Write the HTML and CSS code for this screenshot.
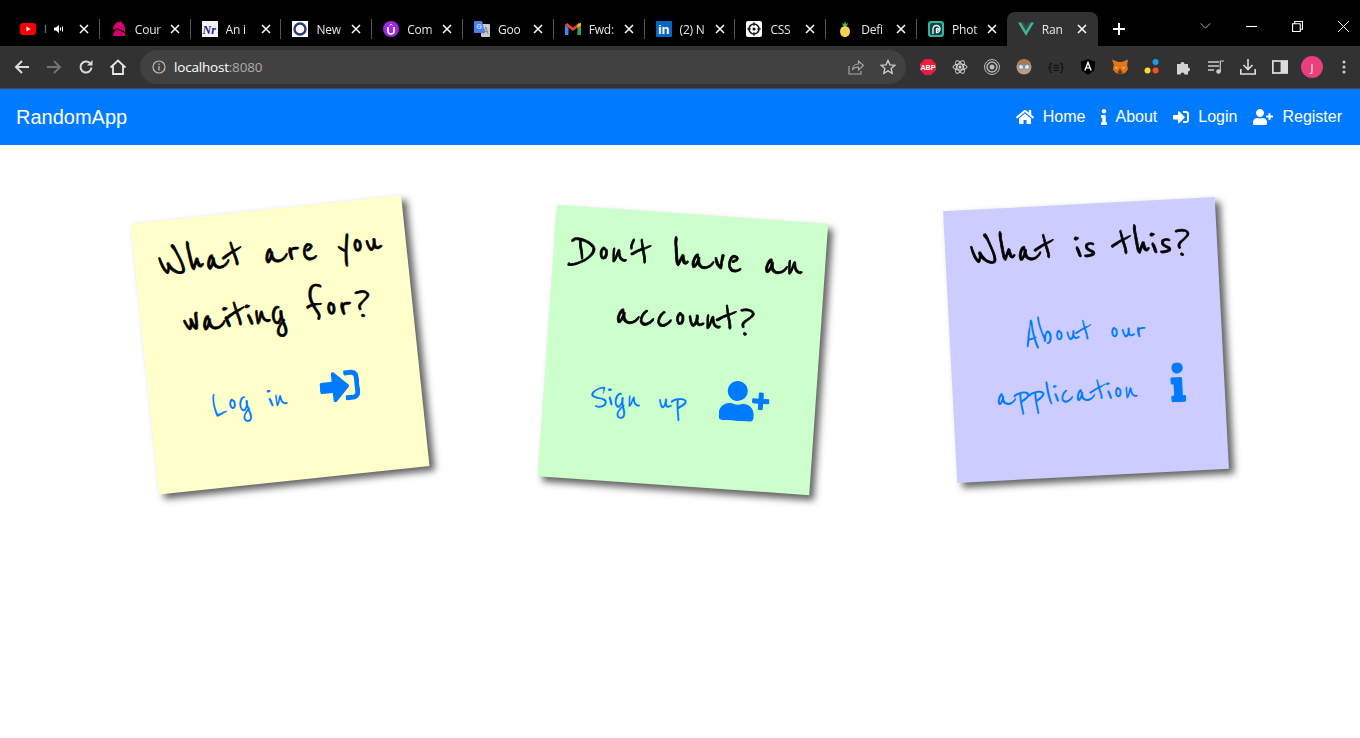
FILE: index.html
```html
<!DOCTYPE html>
<html lang="en">
<head>
    <meta charset="UTF-8">
    <meta name="viewport" content="width=device-width, initial-scale=1.0">
    <title>RandomApp</title>
    <link rel="stylesheet" href="styles.css">
</head>
<body>

<svg class="defs" width="0" height="0" aria-hidden="true">
    <symbol id="i-home" viewBox="0 0 576 512"><path d="M280.37 148.26L96 300.11V464a16 16 0 0 0 16 16l112.06-.29a16 16 0 0 0 15.92-16V368a16 16 0 0 1 16-16h64a16 16 0 0 1 16 16v95.64a16 16 0 0 0 16 16.05L464 480a16 16 0 0 0 16-16V300L295.67 148.26a12.19 12.19 0 0 0-15.3 0zM571.6 251.47L488 182.56V44.05a12 12 0 0 0-12-12h-56a12 12 0 0 0-12 12v72.61L318.47 43a48 48 0 0 0-61 0L4.34 251.47a12 12 0 0 0-1.6 16.9l25.5 31A12 12 0 0 0 45.15 301l235.22-193.74a12.19 12.19 0 0 1 15.3 0L530.9 301a12 12 0 0 0 16.9-1.6l25.5-31a12 12 0 0 0-1.7-16.93z"/></symbol>
    <symbol id="i-info" viewBox="0 0 192 512"><path d="M20 424.229h20V279.771H20c-11.046 0-20-8.954-20-20V212c0-11.046 8.954-20 20-20h112c11.046 0 20 8.954 20 20v212.229h20c11.046 0 20 8.954 20 20V492c0 11.046-8.954 20-20 20H20c-11.046 0-20-8.954-20-20v-47.771c0-11.046 8.954-20 20-20zM96 0C56.235 0 24 32.235 24 72s32.235 72 72 72 72-32.236 72-72S135.764 0 96 0z"/></symbol>
    <symbol id="i-login" viewBox="0 0 512 512"><path d="M416 448h-84c-6.6 0-12-5.4-12-12v-40c0-6.6 5.4-12 12-12h84c17.7 0 32-14.3 32-32V160c0-17.7-14.3-32-32-32h-84c-6.6 0-12-5.4-12-12V76c0-6.6 5.4-12 12-12h84c53 0 96 43 96 96v192c0 53-43 96-96 96zm-47-201L201 79c-15-15-41-4.5-41 17v96H24c-13.3 0-24 10.7-24 24v96c0 13.3 10.7 24 24 24h136v96c0 21.5 26 32 41 17l168-168c9.3-9.4 9.3-24.6 0-34z"/></symbol>
    <symbol id="i-user" viewBox="0 0 640 512"><path d="M624 208h-64v-64c0-8.8-7.2-16-16-16h-32c-8.8 0-16 7.2-16 16v64h-64c-8.8 0-16 7.2-16 16v32c0 8.8 7.2 16 16 16h64v64c0 8.8 7.2 16 16 16h32c8.8 0 16-7.2 16-16v-64h64c8.8 0 16-7.2 16-16v-32c0-8.8-7.2-16-16-16zm-400 48c70.7 0 128-57.3 128-128S294.7 0 224 0 96 57.3 96 128s57.3 128 128 128zm89.6 32h-16.7c-22.2 10.2-46.9 16-72.9 16s-50.6-5.8-72.9-16h-16.7C60.2 288 0 348.2 0 422.4V464c0 26.5 21.5 48 48 48h352c26.5 0 48-21.5 48-48v-41.6c0-74.2-60.2-134.4-134.4-134.4z"/></symbol>
    <symbol id="i-x" viewBox="0 0 10 10"><path d="M1 1l8 8M9 1l-8 8" fill="none" stroke="currentColor" stroke-width="1.5"/></symbol>
</svg>

<div class="tabstrip">
    <div class="tabs">
        <div class="tab tab-sound">
            <svg class="fav" viewBox="0 0 16 16"><rect y="2" width="16" height="12" rx="3" fill="#f00"/><path d="M6.5 5.5v5l4-2.5z" fill="#fff"/></svg>
            <span class="tick">I</span>
            <svg class="speaker" viewBox="0 0 10 10"><path d="M0 3.5h2L5 1v8L2 6.500H0z" fill="#fff"/><path d="M6.500 3.500v3M8.500 2.500v5" stroke="#fff" fill="none"/></svg>
            <svg class="tab-x"><use href="#i-x"/></svg>
        </div>
        <div class="tab">
            <svg class="fav" viewBox="0 0 16 16"><path d="M2 15c0-3 1-4 3-6-1-1-2-1-3 0 0-5 3-8 6-8l2-1 1 2c2 1 3 3 3 6v7z" fill="#d6006e"/><path d="M6 7l8 4v1L5 8z" fill="#000"/></svg>
            <span class="tab-title">Cour</span>
            <svg class="tab-x"><use href="#i-x"/></svg>
        </div>
        <div class="tab">
            <svg class="fav" viewBox="0 0 16 16"><rect width="16" height="16" fill="#f2f2f7"/><text x="0.500" y="12.500" class="fav-nr">Nr</text></svg>
            <span class="tab-title">An i</span>
            <svg class="tab-x"><use href="#i-x"/></svg>
        </div>
        <div class="tab">
            <svg class="fav" viewBox="0 0 16 16"><rect width="16" height="16" fill="#fff"/><circle cx="8" cy="8" r="5.500" fill="none" stroke="#26397c" stroke-width="2.400"/></svg>
            <span class="tab-title">New</span>
            <svg class="tab-x"><use href="#i-x"/></svg>
        </div>
        <div class="tab">
            <svg class="fav" viewBox="0 0 16 16"><circle cx="8" cy="8" r="8" fill="#9b2be0"/><path d="M5 6v4a3 3 0 0 0 6 0V6" fill="none" stroke="#fff" stroke-width="1.600"/><path d="M6.500 4.500L8 3l1.500 1.500" fill="none" stroke="#fff"/></svg>
            <span class="tab-title">Com</span>
            <svg class="tab-x"><use href="#i-x"/></svg>
        </div>
        <div class="tab">
            <svg class="fav" viewBox="0 0 16 16"><rect x="7" y="3" width="9" height="13" rx="1" fill="#ccc"/><path d="M9 13l3-7 2 7M10 10.500h3" stroke="#888" fill="none"/><path d="M1 0h7l3 12H1a1 1 0 0 1-1-1V1a1 1 0 0 1 1-1z" fill="#4a80ec"/><text x="2.500" y="8" class="fav-g">G</text></svg>
            <span class="tab-title">Goo</span>
            <svg class="tab-x"><use href="#i-x"/></svg>
        </div>
        <div class="tab">
            <svg class="fav" viewBox="0 0 16 16"><path d="M0 4v10h3.500V7z" fill="#4285f4"/><path d="M12.500 7v7H16V4z" fill="#34a853"/><path d="M0 4l8 6 8-6-2-2-6 4.500L2 2z" fill="#ea4335"/><path d="M12.500 3.500L16 1.500v3l-3.500 2.500z" fill="#fbbc04"/></svg>
            <span class="tab-title">Fwd:</span>
            <svg class="tab-x"><use href="#i-x"/></svg>
        </div>
        <div class="tab">
            <svg class="fav" viewBox="0 0 16 16"><rect width="16" height="16" rx="1" fill="#0a66c2"/><text x="2" y="13" class="fav-in">in</text></svg>
            <span class="tab-title">(2) N</span>
            <svg class="tab-x"><use href="#i-x"/></svg>
        </div>
        <div class="tab">
            <svg class="fav" viewBox="0 0 16 16"><rect width="16" height="16" rx="2" fill="#fff"/><circle cx="8" cy="8" r="5" fill="none" stroke="#111" stroke-width="1.600"/><circle cx="8" cy="8" r="1.500" fill="#111"/><path d="M8 1v4M8 11v4M1 8h4M11 8h4" stroke="#111"/></svg>
            <span class="tab-title">CSS</span>
            <svg class="tab-x"><use href="#i-x"/></svg>
        </div>
        <div class="tab">
            <svg class="fav" viewBox="0 0 16 16"><path d="M8 0l1 3 2-1-1 3H6L5 2l2 1z" fill="#4caf50"/><ellipse cx="8" cy="10.500" rx="5" ry="5.500" fill="#f7d154"/></svg>
            <span class="tab-title">Defi</span>
            <svg class="tab-x"><use href="#i-x"/></svg>
        </div>
        <div class="tab">
            <svg class="fav" viewBox="0 0 16 16"><rect width="16" height="16" rx="3" fill="#2fb79b"/><rect x="2" y="2" width="12" height="12" rx="2" fill="#16424a"/><path d="M5 13V8a3.500 3.500 0 1 1 3.500 3.500V8.500a1 1 0 1 1 1 .800" fill="none" stroke="#fff" stroke-width="1.300"/></svg>
            <span class="tab-title">Phot</span>
            <svg class="tab-x"><use href="#i-x"/></svg>
        </div>
        <div class="tab tab-active">
            <svg class="fav" viewBox="0 0 16 16"><path d="M0 1.500h3.200L8 9.800l4.800-8.300H16L8 15z" fill="#41b883"/><path d="M3.200 1.500h2.600L8 5.300l2.200-3.800h2.600L8 9.800z" fill="#35495e"/></svg>
            <span class="tab-title">Ran</span>
            <svg class="tab-x"><use href="#i-x"/></svg>
        </div>
    </div>
    <svg class="new-tab" viewBox="0 0 12 12"><path d="M6 0v12M0 6h12" stroke="#fff" stroke-width="2"/></svg>
    <div class="win-controls">
        <svg class="win-chevron" viewBox="0 0 12 7"><path d="M.5 .5L6 6l5.500-5.500" fill="none" stroke="#ccc"/></svg>
        <div class="win-btn"><svg viewBox="0 0 10 10"><path d="M0 5h10" stroke="#fff"/></svg></div>
        <div class="win-btn"><svg viewBox="0 0 10 10"><path d="M.5 2.500h7v7h-7zM2.500 2.500V.5h7v7h-2" fill="none" stroke="#fff"/></svg></div>
        <div class="win-btn"><svg viewBox="0 0 10 10"><path d="M0 0l10 10M10 0L0 10" stroke="#fff" stroke-width=".9"/></svg></div>
    </div>
</div>

<div class="toolbar">
    <div class="tool"><svg viewBox="0 0 16 16"><path d="M15 8H2M8 2L2 8l6 6" fill="none" stroke="#dcdcdc" stroke-width="2"/></svg></div>
    <div class="tool"><svg viewBox="0 0 16 16"><path d="M1 8h13M8 2l6 6-6 6" fill="none" stroke="#737373" stroke-width="2"/></svg></div>
    <div class="tool"><svg viewBox="0 0 16 16"><path d="M13.500 8.500a5.500 5.500 0 1 1-1.600-4.400" fill="none" stroke="#dcdcdc" stroke-width="2"/><path d="M14.500 1v5.500H9z" fill="#dcdcdc"/></svg></div>
    <div class="tool"><svg viewBox="0 0 16 16"><path d="M.5 8.500L8 1.500l7.500 7M3 7v8h10V7" fill="none" stroke="#e8e8e8" stroke-width="1.800"/></svg></div>
    <div class="omnibox">
        <svg class="omni-info" viewBox="0 0 14 14"><circle cx="7" cy="7" r="6" fill="none" stroke="#bbb" stroke-width="1.200"/><path d="M7 6v4.500M7 3.500v1.500" stroke="#bbb" stroke-width="1.300"/></svg>
        <span class="url">localhost<span class="url-port">:8080</span></span>
        <svg class="omni-btn" viewBox="0 0 16 16"><path d="M1 7v8h12v-3" fill="none" stroke="#aaa" stroke-width="1.100"/><path d="M4.500 11c0-4 3-6 6-6V2l5 4.500-5 4.500V8c-3 0-5 1-6 3z" fill="none" stroke="#aaa" stroke-width="1.100"/></svg>
        <svg class="omni-btn" viewBox="0 0 16 16"><path d="M8 1.500l2 4.400 4.700 .5-3.500 3.200 1 4.700L8 11.900l-4.200 2.400 1-4.700L1.300 6.400 6 5.900z" fill="none" stroke="#c8c8c8" stroke-width="1.400"/></svg>
    </div>
    <div class="extensions">
        <div class="tool"><svg viewBox="0 0 18 18"><path d="M5.500 0h7L18 5.500v7L12.500 18h-7L0 12.500v-7z" fill="#ec1c3f"/><text x="9" y="12" class="ext-abp">ABP</text></svg></div>
        <div class="tool"><svg viewBox="0 0 16 16"><g fill="none" stroke="#ddd"><ellipse cx="8" cy="8" rx="7" ry="3"/><ellipse cx="8" cy="8" rx="7" ry="3" transform="rotate(60 8 8)"/><ellipse cx="8" cy="8" rx="7" ry="3" transform="rotate(120 8 8)"/></g><circle cx="8" cy="8" r="1.500" fill="#ddd"/></svg></div>
        <div class="tool"><svg viewBox="0 0 16 16"><g fill="none" stroke="#bbb"><circle cx="8" cy="8" r="7.500"/><circle cx="8" cy="8" r="5" stroke-width="1.400"/></g><circle cx="8" cy="8" r="2.500" fill="#bbb"/></svg></div>
        <div class="tool"><svg viewBox="0 0 16 16"><circle cx="8" cy="8" r="7.500" fill="#c09a7a"/><path d="M1 6a7 6 0 0 1 14 0z" fill="#a87c50"/><circle cx="5" cy="8" r="2.500" fill="#dfe9ee" stroke="#6e93a8"/><circle cx="11" cy="8" r="2.500" fill="#dfe9ee" stroke="#6e93a8"/></svg></div>
        <div class="tool"><span class="ext-braces">{≡}</span></div>
        <div class="tool"><svg viewBox="0 0 16 18"><path d="M8 0l8 3-1 10-7 5-7-5L0 3z" fill="#000"/><path d="M4.500 13L8 4l3.500 9M5.800 10h4.400" fill="none" stroke="#fff" stroke-width="1.600"/></svg></div>
        <div class="tool"><svg viewBox="0 0 18 17"><path d="M0 0l7 3h4l7-3-1 6 1 5-3 4-3 1H7l-3-1-3-4 1-5z" fill="#e2761b"/><path d="M6 15l3-5 3 5-3 2z" fill="#763d16"/><path d="M3 8l4 1-2 2zM15 8l-4 1 2 2z" fill="#f6b17a"/></svg></div>
        <div class="tool"><svg viewBox="0 0 18 18"><circle cx="13" cy="3.500" r="3.400" fill="#1a9be6"/><circle cx="4" cy="13" r="3.400" fill="#fdd835"/><circle cx="13" cy="13" r="3.400" fill="#f4511e"/></svg></div>
        <div class="tool"><svg viewBox="0 0 16 16"><path d="M1 5h3.500a2 2 0 1 1 4 0H12v3.500a2 2 0 1 1 0 4V15.500H8.500a2 2 0 1 0-4 0H1z" fill="#d4d4d4"/></svg></div>
        <div class="tool"><svg viewBox="0 0 16 14"><path d="M0 2h11M0 6h11M0 10h6" stroke="#ccc" stroke-width="1.400"/><circle cx="10.500" cy="11.500" r="2.300" fill="#ccc"/><path d="M12.300 11.500V1H16" fill="none" stroke="#ccc" stroke-width="1.200"/></svg></div>
        <div class="tool"><svg viewBox="0 0 16 16"><path d="M8 0v10M3.500 6L8 10.500 12.500 6M.8 10v5h14.400v-5" fill="none" stroke="#ddd" stroke-width="1.600"/></svg></div>
        <div class="tool"><svg viewBox="0 0 14 12"><path d="M0 0h14v12H0z" fill="#ddd"/><path d="M1.500 1.500h6v9h-6z" fill="#333"/></svg></div>
        <div class="tool"><span class="avatar">J</span></div>
        <div class="tool"><svg class="kebab" viewBox="0 0 4 14"><circle cx="2" cy="2" r="1.500" fill="#ccc"/><circle cx="2" cy="7" r="1.500" fill="#ccc"/><circle cx="2" cy="12" r="1.500" fill="#ccc"/></svg></div>
    </div>
</div>

<nav class="navbar">
    <a class="brand" href="#">RandomApp</a>
    <div class="nav-links">
        <a class="nav-link" href="#"><svg class="nav-icon icon-home"><use href="#i-home"/></svg>Home</a>
        <a class="nav-link" href="#"><svg class="nav-icon icon-info"><use href="#i-info"/></svg>About</a>
        <a class="nav-link" href="#"><svg class="nav-icon icon-login"><use href="#i-login"/></svg>Login</a>
        <a class="nav-link" href="#"><svg class="nav-icon icon-user"><use href="#i-user"/></svg>Register</a>
    </div>
</nav>

<main class="board">
    <div class="note note-yellow">
        <h2>What are you<br>waiting for?</h2>
        <a class="note-link" href="#">Log in <svg class="note-icon icon-login"><use href="#i-login"/></svg></a>
    </div>
    <div class="note note-green">
        <h2>Don't have an<br>account?</h2>
        <a class="note-link" href="#">Sign up <svg class="note-icon icon-user"><use href="#i-user"/></svg></a>
    </div>
    <div class="note note-blue">
        <h2>What is this?</h2>
        <a class="note-link" href="#">About our<br>application <svg class="note-icon icon-info"><use href="#i-info"/></svg></a>
    </div>
</main>

</body>
</html>
```

FILE: styles.css
```css
* {
    box-sizing: border-box;
}

html, body {
    margin: 0;
    height: 100%;
}

body {
    overflow: hidden;
    background-color: #fff;
    font-family: 'Liberation Sans', Arial, sans-serif;
}

.defs {
    display: block;
    height: 0;
}

/* browser chrome */
.tabstrip {
    display: flex;
    align-items: flex-end;
    height: 46px;
    padding-left: 9px;
    background-color: #000;
}

.tabs {
    display: flex;
}

.tab {
    display: flex;
    align-items: center;
    width: 90.8px;
    height: 34px;
    padding-left: 11px;
    position: relative;
    color: #e8e8e8;
    font-family: 'Open Sans', sans-serif;
    font-size: 12px;
}

/* separator between tabs */
.tab::after {
    content: "";
    position: absolute;
    right: 0;
    top: 7px;
    height: 20px;
    border-right: 1px solid #555;
}

.tab:nth-last-child(-n+2)::after {
    display: none;
}

.tab-active {
    margin-left: -1px;
    background-color: #323232;
    border-radius: 8px 8px 0 0;
}

.fav {
    width: 16px;
    height: 16px;
    flex: none;
}

.fav-nr {
    font: italic bold 12px 'Liberation Serif', serif;
    fill: #1d1d7a;
}

.fav-g {
    font: bold 7px 'Liberation Sans', sans-serif;
    fill: #cfe0ff;
}

.fav-in {
    font: bold 13px 'Liberation Sans', sans-serif;
    fill: #fff;
}

.tab-title {
    width: 32px;
    margin-left: 8px;
    white-space: nowrap;
    letter-spacing: -0.2px;
    -webkit-mask-image: linear-gradient(90deg, #000 70%, transparent);
    mask-image: linear-gradient(90deg, #000 70%, transparent);
}

.tick {
    margin-left: 8px;
    font-size: 10px;
    color: #999;
}

.speaker {
    width: 10px;
    height: 10px;
    margin-left: 7px;
}

.tab-x {
    width: 10px;
    height: 10px;
    position: absolute;
    left: 70px;
    top: 12px;
    color: #fff;
}

.new-tab {
    width: 12px;
    height: 12px;
    margin: 0 0 11px 15.5px;
}

.win-controls {
    display: flex;
    align-items: center;
    align-self: stretch;
    margin-left: auto;
    margin-right: -6px;
    padding-top: 6px;
}

.win-chevron {
    width: 11px;
    height: 6px;
    margin-right: 17px;
}

.win-btn {
    display: flex;
    align-items: center;
    justify-content: center;
    width: 46px;
}

.win-btn svg {
    width: 11px;
    height: 11px;
}

.toolbar {
    display: flex;
    align-items: center;
    height: 43px;
    padding-left: 6px;
    background-color: #323232;
    border-bottom: 1px solid #4a4a4a;
}

.tool {
    display: flex;
    align-items: center;
    justify-content: center;
    width: 32px;
    height: 32px;
    flex: none;
}

.tool svg {
    width: 16px;
    height: 16px;
}

.omnibox {
    display: flex;
    align-items: center;
    flex: 1;
    height: 34px;
    margin: 0 6px;
    padding-left: 12px;
    padding-right: 10px;
    background-color: #414141;
    border-radius: 17px;
}

.omni-info {
    width: 14px;
    height: 14px;
}

.url {
    flex: 1;
    margin-left: 8px;
    color: #fff;
    font-family: 'Open Sans', sans-serif;
    font-size: 13.5px;
    letter-spacing: -0.2px;
}

.url-port {
    color: #aaa;
}

.omni-btn {
    width: 16px;
    height: 16px;
    margin-left: 16px;
}

.extensions {
    display: flex;
}

.ext-abp {
    font: bold 8px 'Liberation Sans', sans-serif;
    fill: #fff;
    text-anchor: middle;
}

.ext-braces {
    color: #151515;
    font: bold 10px 'DejaVu Sans Mono', monospace;
}

.avatar {
    display: flex;
    align-items: center;
    justify-content: center;
    width: 22px;
    height: 22px;
    background-color: #ea3f7c;
    border-radius: 50%;
    color: #f5f5f5;
    font-family: 'Open Sans', sans-serif;
    font-size: 11px;
}

.tool .kebab {
    width: 4px;
    height: 14px;
}

/* navbar */
.navbar {
    display: flex;
    align-items: center;
    justify-content: space-between;
    height: 56px;
    padding: 0 10px 0 16px;
    background-color: #007bff;
}

.navbar a {
    color: #fff;
    text-decoration: none;
}

.brand {
    font-size: 20px;
}

.nav-links {
    display: flex;
}

.nav-link {
    display: flex;
    align-items: center;
    padding: 8px;
    font-size: 16px;
}

.nav-icon {
    height: 16px;
    margin-right: 9px;
    fill: #fff;
}

.icon-home { width: 18px; }
.icon-info { width: 6px; margin-right: 8px; }
.icon-login { width: 16px; }
.icon-user { width: 20px; }

/* sticky notes */
.board {
    display: grid;
    grid-template-columns: repeat(3, 272px);
    justify-content: center;
    gap: 131px;
    padding: 64px 0 0 6px;
}

.note {
    height: 272px;
    padding-top: 14px;
    text-align: center;
    box-shadow: 5px 5px 7px rgba(33, 33, 33, .7);
    font-family: 'Reenie Beanie', cursive;
}

.note h2 {
    margin: 0 0 25px;
    font-size: 48px;
    line-height: 60px;
    font-weight: bold;
    color: #000;
    -webkit-text-stroke: 0.7px #000;
}

.note-link {
    display: block;
    font-size: 40px;
    line-height: 60px;
    color: #007bff;
    text-decoration: none;
}

.note-icon {
    height: 40px;
    margin-left: 16px;
    vertical-align: -4px;
    fill: #007bff;
}

.note-icon.icon-login { width: 40px; }
.note-icon.icon-user { width: 50px; }
.note-icon.icon-info { width: 15px; margin-right: -3px; }

.note-yellow {
    background-color: #ffc;
    transform: rotate(-6deg);
}

.note-green {
    background-color: #cfc;
    transform: translateY(5px) rotate(4deg);
}

.note-blue {
    background-color: #ccf;
    transform: translateY(-5px) rotate(-3deg);
}
```
